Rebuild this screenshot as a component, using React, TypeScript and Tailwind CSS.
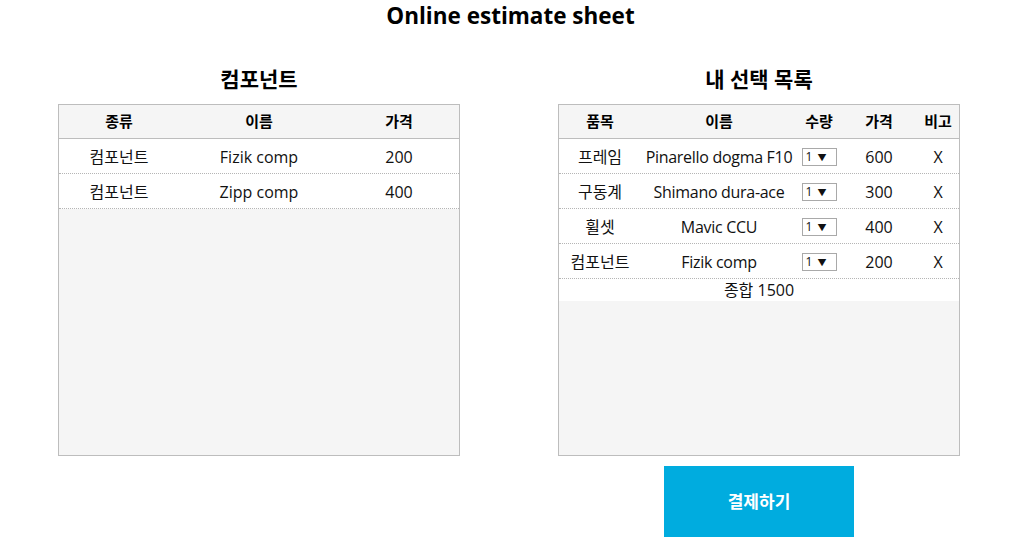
import { useState } from "react";

type Part = { kind: string; name: string; price: number };
type Picked = { item: string; name: string; qty: number; price: number };

const components: Part[] = [
    { kind: "컴포넌트", name: "Fizik comp", price: 200 },
    { kind: "컴포넌트", name: "Zipp comp", price: 400 },
];

const initialPicked: Picked[] = [
    { item: "프레임", name: "Pinarello dogma F10", qty: 1, price: 600 },
    { item: "구동계", name: "Shimano dura-ace", qty: 1, price: 300 },
    { item: "휠셋", name: "Mavic CCU", qty: 1, price: 400 },
    { item: "컴포넌트", name: "Fizik comp", qty: 1, price: 200 },
];

const font = { fontFamily: '"Open Sans", "Noto Sans CJK KR", sans-serif' };

const panelStyle = "w-[402px] h-[352px] border border-[#bdbdbd] bg-[#f5f5f5] flex flex-col";
const headRowStyle = "flex h-[34px] items-center border-b border-[#bdbdbd] text-[15px] font-bold text-black";
const rowStyle = "flex h-[35px] items-center pt-[2px] bg-white border-b border-dotted border-[#b5b5b5] text-[16px] text-[#111]";

function App() {
    const [picked, setPicked] = useState<Picked[]>(initialPicked);
    const total = picked.reduce((sum, p) => sum + p.price * p.qty, 0);

    return <div className="w-[1021px] h-[546px] bg-white text-black" style={font}>
        <div className="h-[30px] flex justify-center text-[22.5px] font-bold leading-[31px]">
            Online estimate sheet
        </div>
        <div className="flex gap-[98px] pl-[58px] pt-[32px]">
            <div className="flex flex-col">
                <div className="h-[42px] flex justify-center text-[21px] font-bold leading-[34px]">컴포넌트</div>
                <div className={panelStyle}>
                    <div className={headRowStyle}>
                        <div className="w-[120px] text-center">종류</div>
                        <div className="w-[160px] text-center">이름</div>
                        <div className="w-[120px] text-center">가격</div>
                    </div>
                    {components.map((c, i) => {
                        return <div key={i} className={rowStyle}>
                            <div className="w-[120px] text-center">{c.kind}</div>
                            <div className="w-[160px] text-center">{c.name}</div>
                            <div className="w-[120px] text-center">{c.price}</div>
                        </div>
                    })}
                </div>
            </div>
            <div className="flex flex-col items-center">
                <div className="h-[42px] flex justify-center text-[21px] font-bold leading-[34px]">내 선택 목록</div>
                <div className={panelStyle}>
                    <div className={headRowStyle}>
                        <div className="w-[82px] text-center">품목</div>
                        <div className="w-[156px] text-center">이름</div>
                        <div className="w-[44px] text-center">수량</div>
                        <div className="w-[76px] text-center">가격</div>
                        <div className="w-[42px] text-center">비고</div>
                    </div>
                    {picked.map((p, i) => {
                        return <div key={i} className={rowStyle}>
                            <div className="w-[82px] text-center whitespace-nowrap">{p.item}</div>
                            <div className="w-[156px] text-center whitespace-nowrap tracking-[-0.3px]">{p.name}</div>
                            <div className="w-[44px] flex justify-center">
                                <div className="w-[35px] h-[18px] border border-[#a9a9a9] bg-white flex items-center gap-[5px] pl-[3px] text-[12px] leading-none">
                                    <span>{p.qty}</span>
                                    <span className="text-[9px]">▼</span>
                                </div>
                            </div>
                            <div className="w-[76px] text-center">{p.price}</div>
                            <div
                                className="w-[42px] text-center cursor-pointer"
                                onClick={() => setPicked(picked.filter((_, j) => j !== i))}
                            >X</div>
                        </div>
                    })}
                    <div className="h-[22px] bg-white flex items-center justify-center text-[16px] text-[#111]">
                        종합 {total}
                    </div>
                </div>
                <button type="button" className="mt-[10px] w-[190px] h-[71px] bg-[#00acdf] text-white text-[17px] font-bold">
                    결제하기
                </button>
            </div>
        </div>
    </div>
}

export default App;
